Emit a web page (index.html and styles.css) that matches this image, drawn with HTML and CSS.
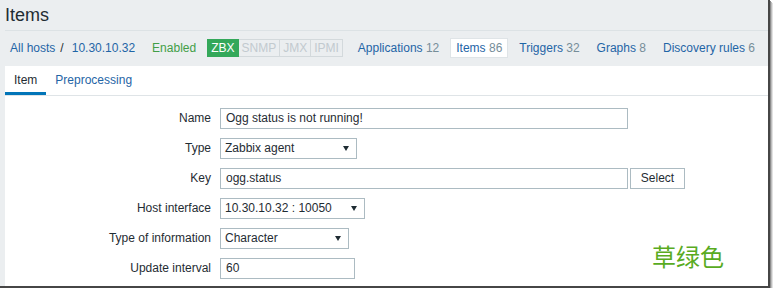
FILE: index.html
```html
<!DOCTYPE html>
<html lang="en">
<head>
<meta charset="utf-8">
<title>Items</title>
<link rel="stylesheet" href="styles.css">
</head>
<body>
<div class="frame">
  <header class="page-header">
    <h1 class="title">Items</h1>
  </header>
  <nav class="host-nav">
    <a class="link crumb">All hosts</a><span class="sep">/</span><a class="link">10.30.10.32</a>
    <span class="status">Enabled</span>
    <span class="badges">
      <span class="badge on">ZBX</span><span class="badge off">SNMP</span><span class="badge off">JMX</span><span class="badge off">IPMI</span>
    </span>
    <ul class="sub-nav">
      <li class="sub-item"><a class="link">Applications</a> <span class="count">12</span></li>
      <li class="sub-item selected"><a class="link">Items</a> <span class="count">86</span></li>
      <li class="sub-item"><a class="link">Triggers</a> <span class="count">32</span></li>
      <li class="sub-item"><a class="link">Graphs</a> <span class="count">8</span></li>
      <li class="sub-item"><a class="link">Discovery rules</a> <span class="count">6</span></li>
    </ul>
  </nav>
  <section class="panel">
    <ul class="tabs">
      <li class="tab active">Item</li>
      <li class="tab link">Preprocessing</li>
    </ul>
    <div class="form">
      <div class="label">Name</div>
      <div class="field"><span class="input w-long">Ogg status is not running!</span></div>

      <div class="label">Type</div>
      <div class="field"><span class="input select w-type">Zabbix agent<span class="arrow"></span></span></div>

      <div class="label">Key</div>
      <div class="field"><span class="input w-long">ogg.status</span><span class="button">Select</span></div>

      <div class="label">Host interface</div>
      <div class="field"><span class="input select w-iface">10.30.10.32 : 10050<span class="arrow"></span></span></div>

      <div class="label">Type of information</div>
      <div class="field"><span class="input select w-info">Character<span class="arrow"></span></span></div>

      <div class="label">Update interval</div>
      <div class="field"><span class="input w-interval">60</span></div>
    </div>
  </section>
  <div class="note">草绿色</div>
</div>
</body>
</html>
```

FILE: styles.css
```css
* { box-sizing: border-box; }

html, body {
  margin: 0;
  padding: 0;
  background: #ffffff;
}

body {
  font-family: "Liberation Sans", Arial, sans-serif;
  font-size: 12px;
  color: #1f2c33;
}

.frame {
  position: relative;
  width: 770px;
  height: 288px;
  padding-left: 5px;
  background: #ebeef0;
  border-right: 2px solid #464646;
  border-bottom: 2px solid #464646;
  box-shadow: 1px 1px 0 #8c8c8c, 2px 2px 0 #bdbdbd, 3px 3px 0 #e2e2e2;
  overflow: hidden;
}

.page-header {
  height: 31px;
  border-bottom: 1px solid #dce2e5;
}

.title {
  margin: 0;
  padding-top: 5px;
  font-size: 18px;
  line-height: 20px;
  font-weight: normal;
  color: #1f2c33;
}

.host-nav {
  display: flex;
  align-items: center;
  padding: 7px 0 8px 5px;
  height: 35px;
  white-space: nowrap;
}

.link {
  color: #1f65a6;
  text-decoration: none;
}

.sep {
  margin: 0 8px 0 5px;
  color: #1f2c33;
}

.status {
  margin-left: 17px;
  color: #429e47;
}

.badges {
  display: flex;
  margin-left: 11px;
}

.badge {
  padding: 0 3px;
  line-height: 16px;
  border: 1px solid #d3d9dc;
}

.badge.on {
  background: #34a85a;
  border-color: #34a85a;
  color: #ffffff;
}

.badge.off {
  color: #c2cacf;
  background: #ebeef0;
  border-left: 0;
}

.sub-nav {
  display: flex;
  gap: 5px;
  margin: 0 0 0 9px;
  padding: 0;
  list-style: none;
}

.sub-item {
  padding: 0 5px;
  line-height: 18px;
  border: 1px solid transparent;
}

.sub-item.selected {
  background: #ffffff;
  border-color: #dfe4e7;
}

.count {
  color: #768d99;
}

.panel {
  background: #ffffff;
  height: 230px;
}

.tabs {
  display: flex;
  margin: 0;
  padding: 0;
  list-style: none;
  border-bottom: 1px solid #dfe4e7;
}

.tab {
  padding: 7px 9px 5px;
  line-height: 14px;
  border-bottom: 3px solid transparent;
}

.tab.active {
  color: #1f2c33;
  border-bottom-color: #0275b8;
}

.form {
  display: grid;
  grid-template-columns: 206px auto;
  column-gap: 9px;
  row-gap: 9px;
  padding-top: 12px;
}

.label {
  text-align: right;
  line-height: 21px;
  color: #1f2c33;
}

.field {
  display: flex;
  gap: 2px;
}

.input {
  display: block;
  height: 21px;
  padding: 0 5px;
  line-height: 19px;
  border: 1px solid #acbbc2;
  background: #ffffff;
  color: #1f2c33;
  white-space: nowrap;
}

.select {
  display: flex;
  align-items: center;
  justify-content: space-between;
  padding: 0 7px 0 4px;
}

.arrow {
  width: 0;
  height: 0;
  border-left: 3px solid transparent;
  border-right: 3px solid transparent;
  border-top: 5px solid #1f2c33;
}

.w-long { width: 408px; }
.w-type { width: 137px; }
.w-iface { width: 145px; }
.w-info { width: 129px; }
.w-interval { width: 135px; }

.button {
  width: 55px;
  height: 21px;
  line-height: 19px;
  text-align: center;
  border: 1px solid #acbbc2;
  background: #ffffff;
  color: #1f2c33;
}

.note {
  position: absolute;
  left: 652px;
  top: 244px;
  font-family: "Noto Sans CJK SC", sans-serif;
  font-size: 24px;
  line-height: 24px;
  color: #59ab1f;
}
```
